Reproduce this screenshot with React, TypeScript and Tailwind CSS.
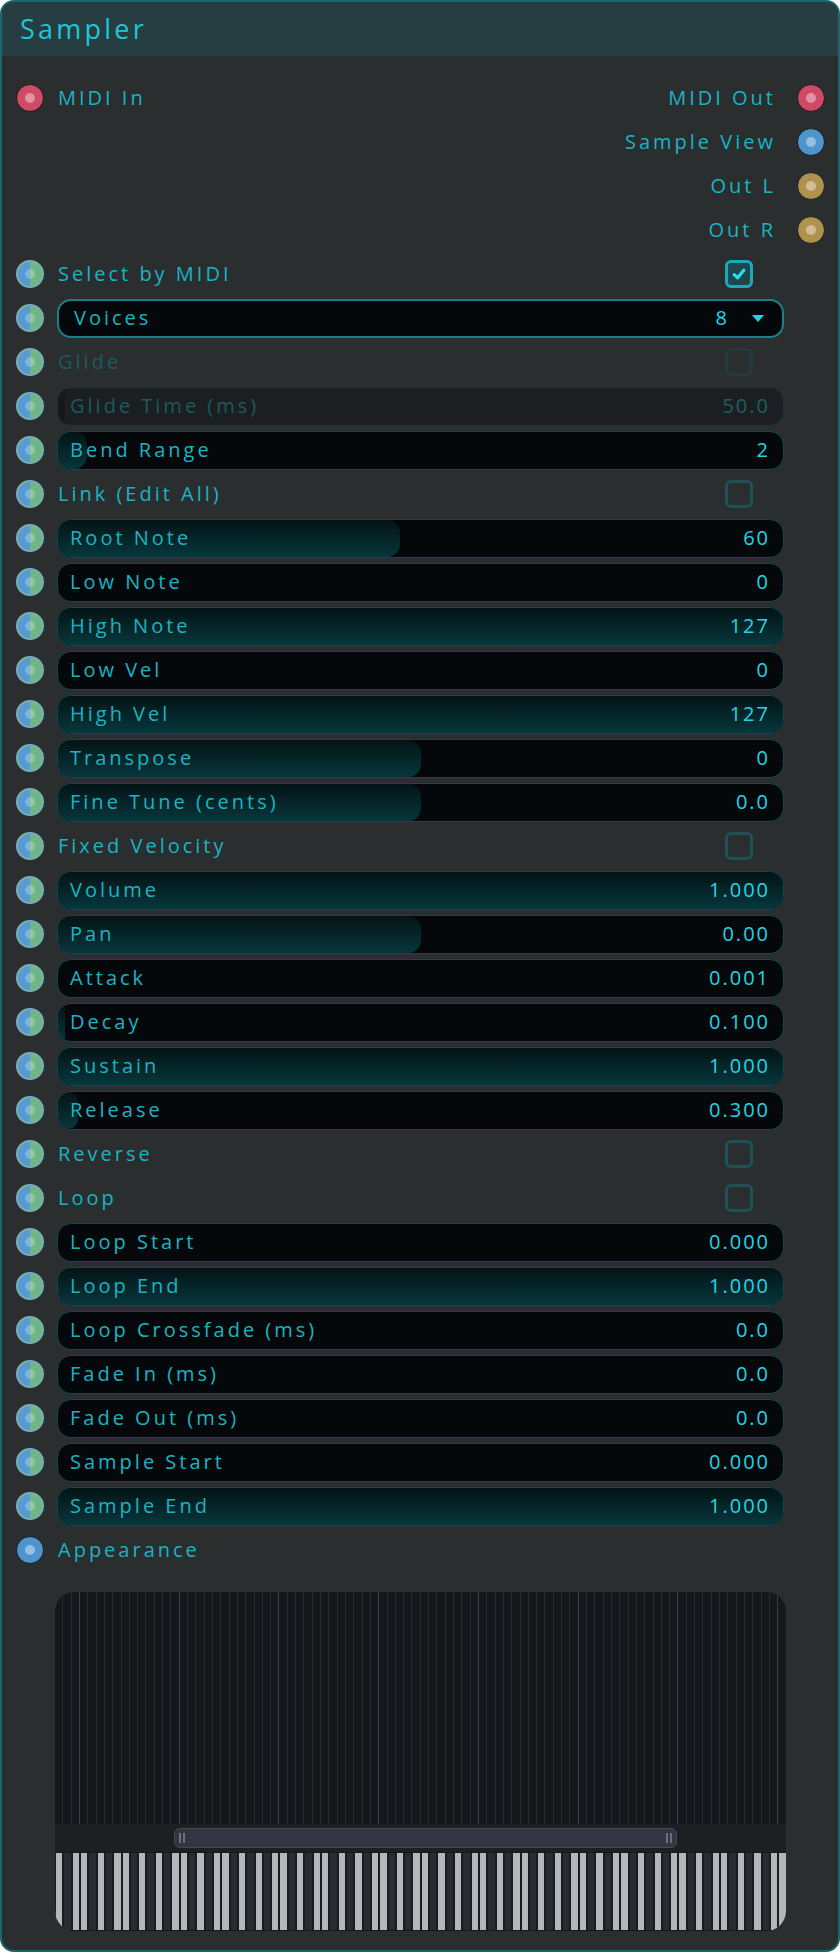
import React from "react";

type Param =
  | { kind: "check"; label: string; checked?: boolean; disabled?: boolean }
  | { kind: "select"; label: string; value: string }
  | { kind: "slider"; label: string; value: string; fill: string; disabled?: boolean };

const params: Param[] = [
  { kind: "check", label: "Select by MIDI", checked: true },
  { kind: "select", label: "Voices", value: "8" },
  { kind: "check", label: "Glide", disabled: true },
  { kind: "slider", label: "Glide Time (ms)", value: "50.0", fill: "7px", disabled: true },
  { kind: "slider", label: "Bend Range", value: "2", fill: "29px" },
  { kind: "check", label: "Link (Edit All)" },
  { kind: "slider", label: "Root Note", value: "60", fill: "47.2%" },
  { kind: "slider", label: "Low Note", value: "0", fill: "0%" },
  { kind: "slider", label: "High Note", value: "127", fill: "100%" },
  { kind: "slider", label: "Low Vel", value: "0", fill: "0%" },
  { kind: "slider", label: "High Vel", value: "127", fill: "100%" },
  { kind: "slider", label: "Transpose", value: "0", fill: "50%" },
  { kind: "slider", label: "Fine Tune (cents)", value: "0.0", fill: "50%" },
  { kind: "check", label: "Fixed Velocity" },
  { kind: "slider", label: "Volume", value: "1.000", fill: "100%" },
  { kind: "slider", label: "Pan", value: "0.00", fill: "50%" },
  { kind: "slider", label: "Attack", value: "0.001", fill: "0%" },
  { kind: "slider", label: "Decay", value: "0.100", fill: "7px" },
  { kind: "slider", label: "Sustain", value: "1.000", fill: "100%" },
  { kind: "slider", label: "Release", value: "0.300", fill: "20px" },
  { kind: "check", label: "Reverse" },
  { kind: "check", label: "Loop" },
  { kind: "slider", label: "Loop Start", value: "0.000", fill: "0%" },
  { kind: "slider", label: "Loop End", value: "1.000", fill: "100%" },
  { kind: "slider", label: "Loop Crossfade (ms)", value: "0.0", fill: "0%" },
  { kind: "slider", label: "Fade In (ms)", value: "0.0", fill: "0%" },
  { kind: "slider", label: "Fade Out (ms)", value: "0.0", fill: "0%" },
  { kind: "slider", label: "Sample Start", value: "0.000", fill: "0%" },
  { kind: "slider", label: "Sample End", value: "1.000", fill: "100%" },
];

function Port({ color }: { color: "param" | "midi" | "blue" | "gold" }) {
  if (color === "param") {
    return (
      <div className="flex h-[28px] w-[28px] items-center justify-center rounded-full border-2 border-[#78aeb2] bg-[linear-gradient(to_right,#559ad2_50%,#6fb586_50%)]">
        <div className="h-[10px] w-[10px] rounded-full bg-white/25" />
      </div>
    );
  }
  const bg = color === "midi" ? "bg-[#cf4a65]" : color === "blue" ? "bg-[#4f95cd]" : "bg-[#b0924f]";
  return (
    <div className={`flex h-[28px] w-[28px] items-center justify-center rounded-full border border-[#1b1c1e] ${bg}`}>
      <div className="h-[10px] w-[10px] rounded-full bg-white/40" />
    </div>
  );
}

function Checkbox({ checked, disabled }: { checked?: boolean; disabled?: boolean }) {
  if (checked) {
    return (
      <div className="flex h-[28px] w-[28px] items-center justify-center rounded-[6px] border-[3px] border-[#19abbb] bg-[#1f464b]">
        <svg width="16" height="16" viewBox="0 0 16 16">
          <path d="M3.2 8.6 L6.6 11.8 L12.8 4.2" fill="none" stroke="#1fe3f2" strokeWidth="3.2" strokeLinecap="round" strokeLinejoin="round" />
        </svg>
      </div>
    );
  }
  return (
    <div
      className={`h-[28px] w-[28px] rounded-[6px] border-[3px] ${disabled ? "border-[#233b3d]" : "border-[#1e5256]"}`}
    />
  );
}

function Slider({ label, value, fill, disabled }: { label: string; value: string; fill: string; disabled?: boolean }) {
  return (
    <div
      className={`relative flex h-[39px] flex-1 items-center overflow-hidden rounded-[14px] border pl-[12px] pr-[13px] ${
        disabled ? "border-[#1b3538] bg-[#1b1f21]" : "border-[#0e4a50] bg-[#04080a]"
      }`}
    >
      {fill !== "0%" && (
        <div
          className={`absolute inset-y-0 left-0 rounded-[13px] ${
            disabled ? "bg-[#15191b]" : "bg-gradient-to-b from-[#031416] to-[#07373c]"
          }`}
          style={{ width: fill }}
        />
      )}
      <span className={`relative ${disabled ? "text-[#1d5a60]" : "text-[#19b4c4]"}`}>{label}</span>
      <span className={`relative ml-auto tracking-[0.1em] ${disabled ? "text-[#1e5f65]" : "text-[#20d6e8]"}`}>{value}</span>
    </div>
  );
}

function Select({ label, value }: { label: string; value: string }) {
  return (
    <div className="flex h-[39px] flex-1 items-center rounded-[14px] border-2 border-[#19808a] bg-[#04080a] pl-[15px] pr-[18px]">
      <span className="text-[#19b4c4]">{label}</span>
      <span className="ml-auto mr-[22px] text-[#20d6e8]">{value}</span>
      <svg width="12" height="7" viewBox="0 0 12 7">
        <path d="M0 0 H12 L6 7 Z" fill="#1fd6e8" />
      </svg>
    </div>
  );
}

function Row({ left, right, children }: { left?: React.ReactNode; right?: React.ReactNode; children?: React.ReactNode }) {
  return (
    <div className="flex h-[44px] items-center">
      <div className="w-[28px] shrink-0">{left}</div>
      <div className="mx-[13px] flex min-w-0 flex-1 items-center">{children}</div>
      <div className="w-[28px] shrink-0">{right}</div>
    </div>
  );
}

const BLACK = [1, 3, 6, 8, 10];
const keys = Array.from({ length: 88 }, (_, i) => {
  const pc = (21 + i) % 12;
  return { black: BLACK.includes(pc), c: pc === 0 };
});

function SampleView() {
  return (
    <div className="ml-[39px] flex h-[339px] w-[731px] flex-col overflow-hidden rounded-[20px] bg-[#1d1f23]">
      <div className="flex flex-1 bg-[#15171b]">
        {keys.map((k, i) => (
          <div
            key={i}
            className={`flex-1 ${i === 0 ? "" : k.c ? "border-l border-[#3b3e44]" : "border-l border-[#272a2f]"}`}
          />
        ))}
      </div>
      <div className="flex h-[28px] items-center bg-[#1d1f23]">
        <div className="ml-[119px] flex h-[20px] w-[503px] items-center justify-between rounded-[6px] border border-[#454954] bg-[#323640] px-[4px]">
          <div className="flex gap-[2px]">
            <div className="h-[10px] w-[2px] bg-[#6c707a]" />
            <div className="h-[10px] w-[2px] bg-[#6c707a]" />
          </div>
          <div className="flex gap-[2px]">
            <div className="h-[10px] w-[2px] bg-[#6c707a]" />
            <div className="h-[10px] w-[2px] bg-[#6c707a]" />
          </div>
        </div>
      </div>
      <div className="flex h-[79px] border-y border-[#16171a] bg-[#1b1c1f]">
        {keys.map((k, i) => (
          <div
            key={i}
            className={`flex-1 border-x border-[#1b1c1f] ${k.black ? "bg-[#2a2c31]" : "bg-[#b5b6ba]"}`}
          />
        ))}
      </div>
    </div>
  );
}

export default function App() {
  return (
    <div className="min-h-screen bg-white font-['Open_Sans',sans-serif] text-[20px] leading-[28px] tracking-[0.15em]">
      <div className="overflow-hidden rounded-[14px] border-2 border-[#1c676b] bg-[#2a2e2f]">
        <div className="flex h-[54px] items-center bg-[#263e42] pl-[18px]">
          <span className="text-[27px] tracking-[0.12em] text-[#1ec6d6]">Sampler</span>
        </div>
        <div className="pb-[19px] pl-[14px] pr-[13px] pt-[20px]">
          <Row left={<Port color="midi" />} right={<Port color="midi" />}>
            <span className="ml-[1px] text-[#19b4c4]">MIDI In</span>
            <span className="ml-auto mr-[8px] text-[#19b4c4]">MIDI Out</span>
          </Row>
          <Row right={<Port color="blue" />}>
            <span className="ml-auto mr-[8px] text-[#19b4c4]">Sample View</span>
          </Row>
          <Row right={<Port color="gold" />}>
            <span className="ml-auto mr-[8px] text-[#19b4c4]">Out L</span>
          </Row>
          <Row right={<Port color="gold" />}>
            <span className="ml-auto mr-[8px] text-[#19b4c4]">Out R</span>
          </Row>
          {params.map((p) => (
            <Row key={p.label} left={<Port color="param" />}>
              {p.kind === "check" && (
                <>
                  <span className={`ml-[1px] ${p.disabled ? "text-[#1d5a60]" : "text-[#19b4c4]"}`}>{p.label}</span>
                  <div className="ml-auto mr-[31px]">
                    <Checkbox checked={p.checked} disabled={p.disabled} />
                  </div>
                </>
              )}
              {p.kind === "select" && <Select label={p.label} value={p.value} />}
              {p.kind === "slider" && <Slider label={p.label} value={p.value} fill={p.fill} disabled={p.disabled} />}
            </Row>
          ))}
          <Row left={<Port color="blue" />}>
            <span className="ml-[1px] text-[#19b4c4]">Appearance</span>
          </Row>
          <div className="mt-[20px]">
            <SampleView />
          </div>
        </div>
      </div>
    </div>
  );
}
